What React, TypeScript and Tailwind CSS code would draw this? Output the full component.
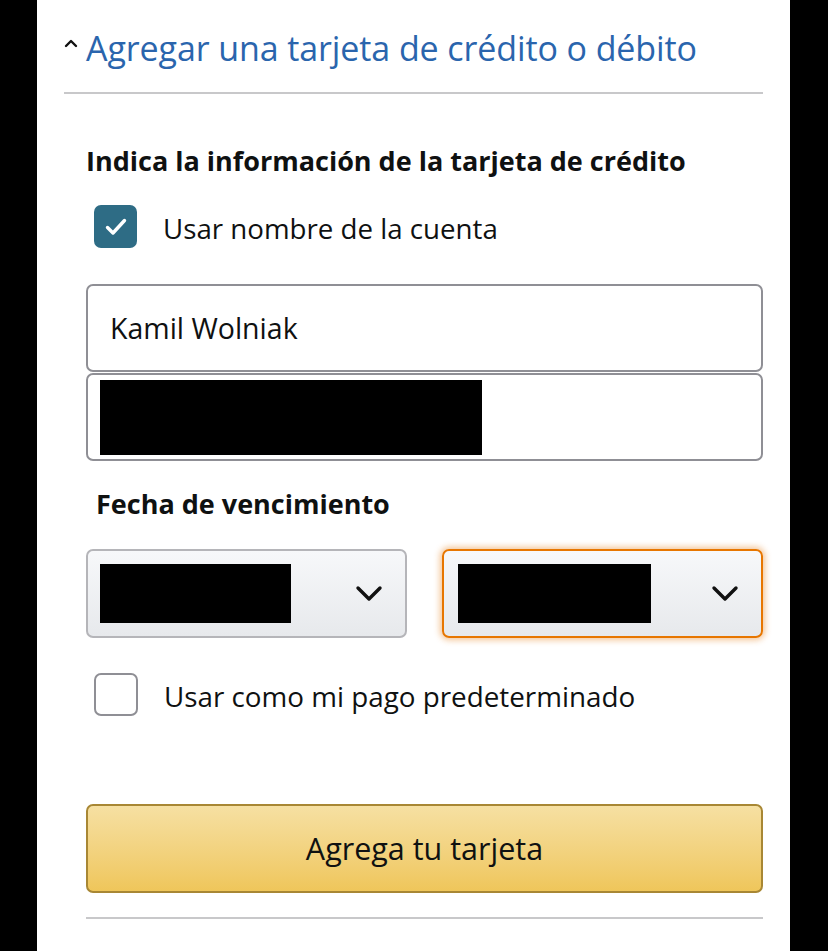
import React from "react";

function Chevron() {
  return (
    <svg width="28" height="17" viewBox="0 0 28 17" fill="none">
      <path d="M3 3 L14 14 L25 3" stroke="#111" strokeWidth="3.4" strokeLinecap="round" strokeLinejoin="round" />
    </svg>
  );
}

export default function App() {
  return (
    <div className="w-[828px] h-[951px] bg-black flex overflow-hidden" style={{ fontFamily: '"Open Sans", "Liberation Sans", sans-serif' }}>
      <div className="ml-[37px] w-[753px] h-full bg-white flex flex-col">
        <div className="pl-[27px] pr-[27px]">
          <div className="flex items-center h-[94px] pt-[3px] border-b-2 border-[#c8c8ca]">
            <svg width="14" height="10" viewBox="0 0 14 10" fill="none" className="mr-[8px] mt-[-10px] shrink-0">
              <path d="M2 8 L7 3 L12 8" stroke="#111" strokeWidth="2.4" strokeLinecap="round" strokeLinejoin="round" />
            </svg>
            <span className="text-[34px] text-[#2a65ad] leading-none whitespace-nowrap tracking-[-0.1px]">Agregar una tarjeta de crédito o débito</span>
          </div>
        </div>
        <div className="pl-[49px] pr-[27px] flex flex-col">
          <div className="mt-[52px] h-[28px] flex items-center text-[27px] font-bold text-[#0f1111] leading-none whitespace-nowrap">Indica la información de la tarjeta de crédito</div>
          <div className="flex items-center mt-[31px] ml-[8px] h-[43px]">
            <div className="w-[43px] h-[43px] rounded-[7px] bg-[#2e6c85] flex items-center justify-center shrink-0">
              <svg width="24" height="20" viewBox="0 0 24 20" fill="none">
                <path d="M3.5 10.5 L9 16 L20.5 3.5" stroke="white" strokeWidth="3.4" strokeLinecap="round" strokeLinejoin="round" />
              </svg>
            </div>
            <span className="ml-[26px] text-[27.7px] text-[#0f1111] leading-none mt-[4px] whitespace-nowrap">Usar nombre de la cuenta</span>
          </div>
          <div className="mt-[36px] flex flex-col">
            <div className="h-[88px] border-2 border-[#8f8f95] rounded-[7px] flex items-center pl-[22px] text-[28.5px] text-[#0f1111] leading-none">Kamil Wolniak</div>
            <div className="mt-[1px] h-[88px] border-2 border-[#8f8f95] rounded-[7px] flex items-center pl-[12px]">
              <div className="w-[382px] h-[75px] bg-black" />
            </div>
          </div>
          <div className="mt-[29px] ml-[10px] h-[27px] flex items-center text-[27px] font-bold text-[#0f1111] leading-none whitespace-nowrap">Fecha de vencimiento</div>
          <div className="mt-[32px] flex gap-[35px]">
            <div className="w-[321px] h-[89px] border-2 border-[#b5b5b9] rounded-[7px] bg-gradient-to-b from-[#f7f8fa] to-[#e7e9ec] flex items-center pl-[12px] pr-[22px] justify-between">
              <div className="w-[191px] h-[59px] bg-black" />
              <Chevron />
            </div>
            <div className="w-[321px] h-[89px] border-2 border-[#e77600] rounded-[7px] bg-gradient-to-b from-[#f7f8fa] to-[#e7e9ec] flex items-center pl-[14px] pr-[22px] justify-between shadow-[0_0_6px_2px_rgba(228,121,17,0.45)]">
              <div className="w-[193px] h-[59px] bg-black" />
              <Chevron />
            </div>
          </div>
          <div className="flex items-center mt-[35px] ml-[8px] h-[43px]">
            <div className="w-[44px] h-[43px] rounded-[7px] border-2 border-[#8f8f95] bg-white shrink-0" />
            <span className="ml-[26px] text-[27.8px] text-[#0f1111] leading-none mt-[4px] whitespace-nowrap">Usar como mi pago predeterminado</span>
          </div>
          <div className="mt-[88px] h-[89px] rounded-[7px] border-2 border-[#a88734] bg-gradient-to-b from-[#f6e0a2] to-[#efc65a] flex items-center justify-center text-[30.5px] text-[#0f1111] leading-none">Agrega tu tarjeta</div>
          <div className="mt-[24px] h-[2px] bg-[#c8c8ca]" />
        </div>
      </div>
    </div>
  );
}
